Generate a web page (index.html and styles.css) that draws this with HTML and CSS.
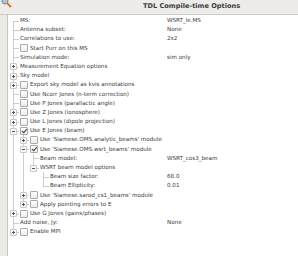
FILE: index.html
```html
<!DOCTYPE html>
<html lang="en">
<head>
    <meta charset="UTF-8">
    <title>TDL Compile-time Options</title>
    <link rel="stylesheet" href="styles.css">
</head>
<body>
    <div class="window">
        <div class="titlebar">
            <svg class="app-icon" width="12" height="10" viewBox="0 0 12 10">
                <circle cx="4" cy="2" r="3" fill="#b9c4d3" stroke="#7d8796" stroke-width="1"/>
                <line x1="6" y1="4" x2="10" y2="8" stroke="#c7802e" stroke-width="2"/>
            </svg>
            <span class="title">TDL Compile-time Options</span>
        </div>
        <div class="frame">
            <div class="tree">
                <div class="row"><div class="item"><span class="g first"></span><span class="label">MS:</span></div><span class="value">WSRT_le.MS</span></div>
                <div class="row"><div class="item"><span class="g tee"></span><span class="label">Antenna subset:</span></div><span class="value">None</span></div>
                <div class="row"><div class="item"><span class="g tee"></span><span class="label">Correlations to use:</span></div><span class="value">2x2</span></div>
                <div class="row"><div class="item"><span class="g tee"></span><span class="check"></span><span class="label">Start Purr on this MS</span></div></div>
                <div class="row"><div class="item"><span class="g tee"></span><span class="label">Simulation mode:</span></div><span class="value">sim only</span></div>
                <div class="row"><div class="item"><span class="g tee"><i class="exp closed"></i></span><span class="label">Measurement Equation options</span></div></div>
                <div class="row"><div class="item"><span class="g tee"><i class="exp closed"></i></span><span class="label">Sky model</span></div></div>
                <div class="row"><div class="item"><span class="g tee"><i class="exp closed"></i></span><span class="check"></span><span class="label">Export sky model as kvis annotations</span></div></div>
                <div class="row"><div class="item"><span class="g tee"></span><span class="check"></span><span class="label">Use Ncorr Jones (n-term correction)</span></div></div>
                <div class="row"><div class="item"><span class="g tee"></span><span class="check"></span><span class="label">Use P Jones (parallactic angle)</span></div></div>
                <div class="row"><div class="item"><span class="g tee"><i class="exp closed"></i></span><span class="check"></span><span class="label">Use Z Jones (ionosphere)</span></div></div>
                <div class="row"><div class="item"><span class="g tee"><i class="exp closed"></i></span><span class="check"></span><span class="label">Use L Jones (dipole projection)</span></div></div>
                <div class="row"><div class="item"><span class="g tee"><i class="exp"></i></span><span class="check on"></span><span class="label">Use E Jones (beam)</span></div></div>
                <div class="row"><div class="item"><span class="g pipe"></span><span class="g tee"><i class="exp closed"></i></span><span class="check"></span><span class="label">Use 'Siamese.OMS.analytic_beams' module</span></div></div>
                <div class="row"><div class="item"><span class="g pipe"></span><span class="g tee"><i class="exp"></i></span><span class="check on"></span><span class="label">Use 'Siamese.OMS.wsrt_beams' module</span></div></div>
                <div class="row"><div class="item"><span class="g pipe"></span><span class="g pipe"></span><span class="g tee"></span><span class="label">Beam model:</span></div><span class="value">WSRT_cos3_beam</span></div>
                <div class="row"><div class="item"><span class="g pipe"></span><span class="g pipe"></span><span class="g end"><i class="exp"></i></span><span class="label">WSRT beam model options</span></div></div>
                <div class="row"><div class="item"><span class="g pipe"></span><span class="g pipe"></span><span class="g"></span><span class="g tee"></span><span class="label">Beam size factor:</span></div><span class="value">68.0</span></div>
                <div class="row"><div class="item"><span class="g pipe"></span><span class="g pipe"></span><span class="g"></span><span class="g end"></span><span class="label">Beam Ellipticity:</span></div><span class="value">0.01</span></div>
                <div class="row"><div class="item"><span class="g pipe"></span><span class="g tee"><i class="exp closed"></i></span><span class="check"></span><span class="label">Use 'Siamese.sarod_cs1_beams' module</span></div></div>
                <div class="row"><div class="item"><span class="g pipe"></span><span class="g end"><i class="exp closed"></i></span><span class="check"></span><span class="label">Apply pointing errors to E</span></div></div>
                <div class="row"><div class="item"><span class="g tee"><i class="exp closed"></i></span><span class="check"></span><span class="label">Use G Jones (gains/phases)</span></div></div>
                <div class="row"><div class="item"><span class="g tee"></span><span class="label">Add noise, Jy:</span></div><span class="value">None</span></div>
                <div class="row"><div class="item"><span class="g end"><i class="exp closed"></i></span><span class="check"></span><span class="label">Enable MPI</span></div></div>
            </div>
        </div>
    </div>
</body>
</html>
```

FILE: styles.css
```css
/* Compile-time options dialog */
body {
    margin: 0;
    padding: 0;
    font-family: "DejaVu Sans", sans-serif;
    color: #3a3a3a;
    background-color: #edebe8;
}

.window {
    width: 298px;
    height: 256px;
    overflow: hidden;
}

.titlebar {
    height: 14px;
    position: relative;
    background-color: #edecea;
    border-bottom: 1px solid #cfccc7;
}

.app-icon {
    position: absolute;
    left: 1px;
    top: -1px;
}

.title {
    position: absolute;
    left: 143px;
    top: 2px;
    font-weight: bold;
    font-size: 6.6px;
    color: #3c3c3c;
}

.frame {
    padding-left: 7px;
}

.tree {
    background-color: #fff;
    border-left: 1px solid #c9c6c1;
    height: 241px;
    padding-top: 1px;
}

.row {
    display: grid;
    grid-template-columns: 159px 1fr;
    height: 9.2px;
    font-size: 5.6px;
    line-height: 9.2px;
}

.item {
    display: flex;
    align-items: center;
    height: 100%;
    white-space: nowrap;
}

.label {
    margin-left: 2px;
}

.value {
    white-space: nowrap;
}

/* tree guide columns */
.g {
    position: relative;
    flex: none;
    width: 10px;
    height: 100%;
}

.g.pipe::before,
.g.tee::before,
.g.end::before,
.g.first::before {
    content: "";
    position: absolute;
    left: 5px;
    width: 1px;
    background-color: #cdcdcd;
    top: 0;
    bottom: 0;
}

.g.end::before {
    bottom: 50%;
}

.g.first::before {
    top: 50%;
}

.g.tee::after,
.g.end::after,
.g.first::after {
    content: "";
    position: absolute;
    left: 5px;
    width: 6px;
    top: 50%;
    height: 1px;
    background-color: #cdcdcd;
}

.exp {
    position: absolute;
    left: 2px;
    top: 1.5px;
    width: 5px;
    height: 5px;
    border: 1px solid #c8c8c8;
    border-radius: 1px;
    background-color: #f7f7f7;
    z-index: 1;
}

.exp::before {
    content: "";
    position: absolute;
    left: 1px;
    top: 2px;
    width: 3px;
    height: 1px;
    background-color: #555;
}

.exp.closed::after {
    content: "";
    position: absolute;
    left: 2px;
    top: 1px;
    width: 1px;
    height: 3px;
    background-color: #555;
}

.check {
    position: relative;
    flex: none;
    width: 6px;
    height: 6px;
    margin-left: 2px;
    border: 1px solid #a9a9a9;
    border-radius: 1px;
    background: linear-gradient(#ffffff, #ececec);
}

.check + .label {
    margin-left: 2px;
}

.check.on::after {
    content: "";
    position: absolute;
    left: 1.5px;
    top: 0;
    width: 2px;
    height: 3.5px;
    border-right: 1px solid #333;
    border-bottom: 1px solid #333;
    transform: rotate(40deg);
}
```
